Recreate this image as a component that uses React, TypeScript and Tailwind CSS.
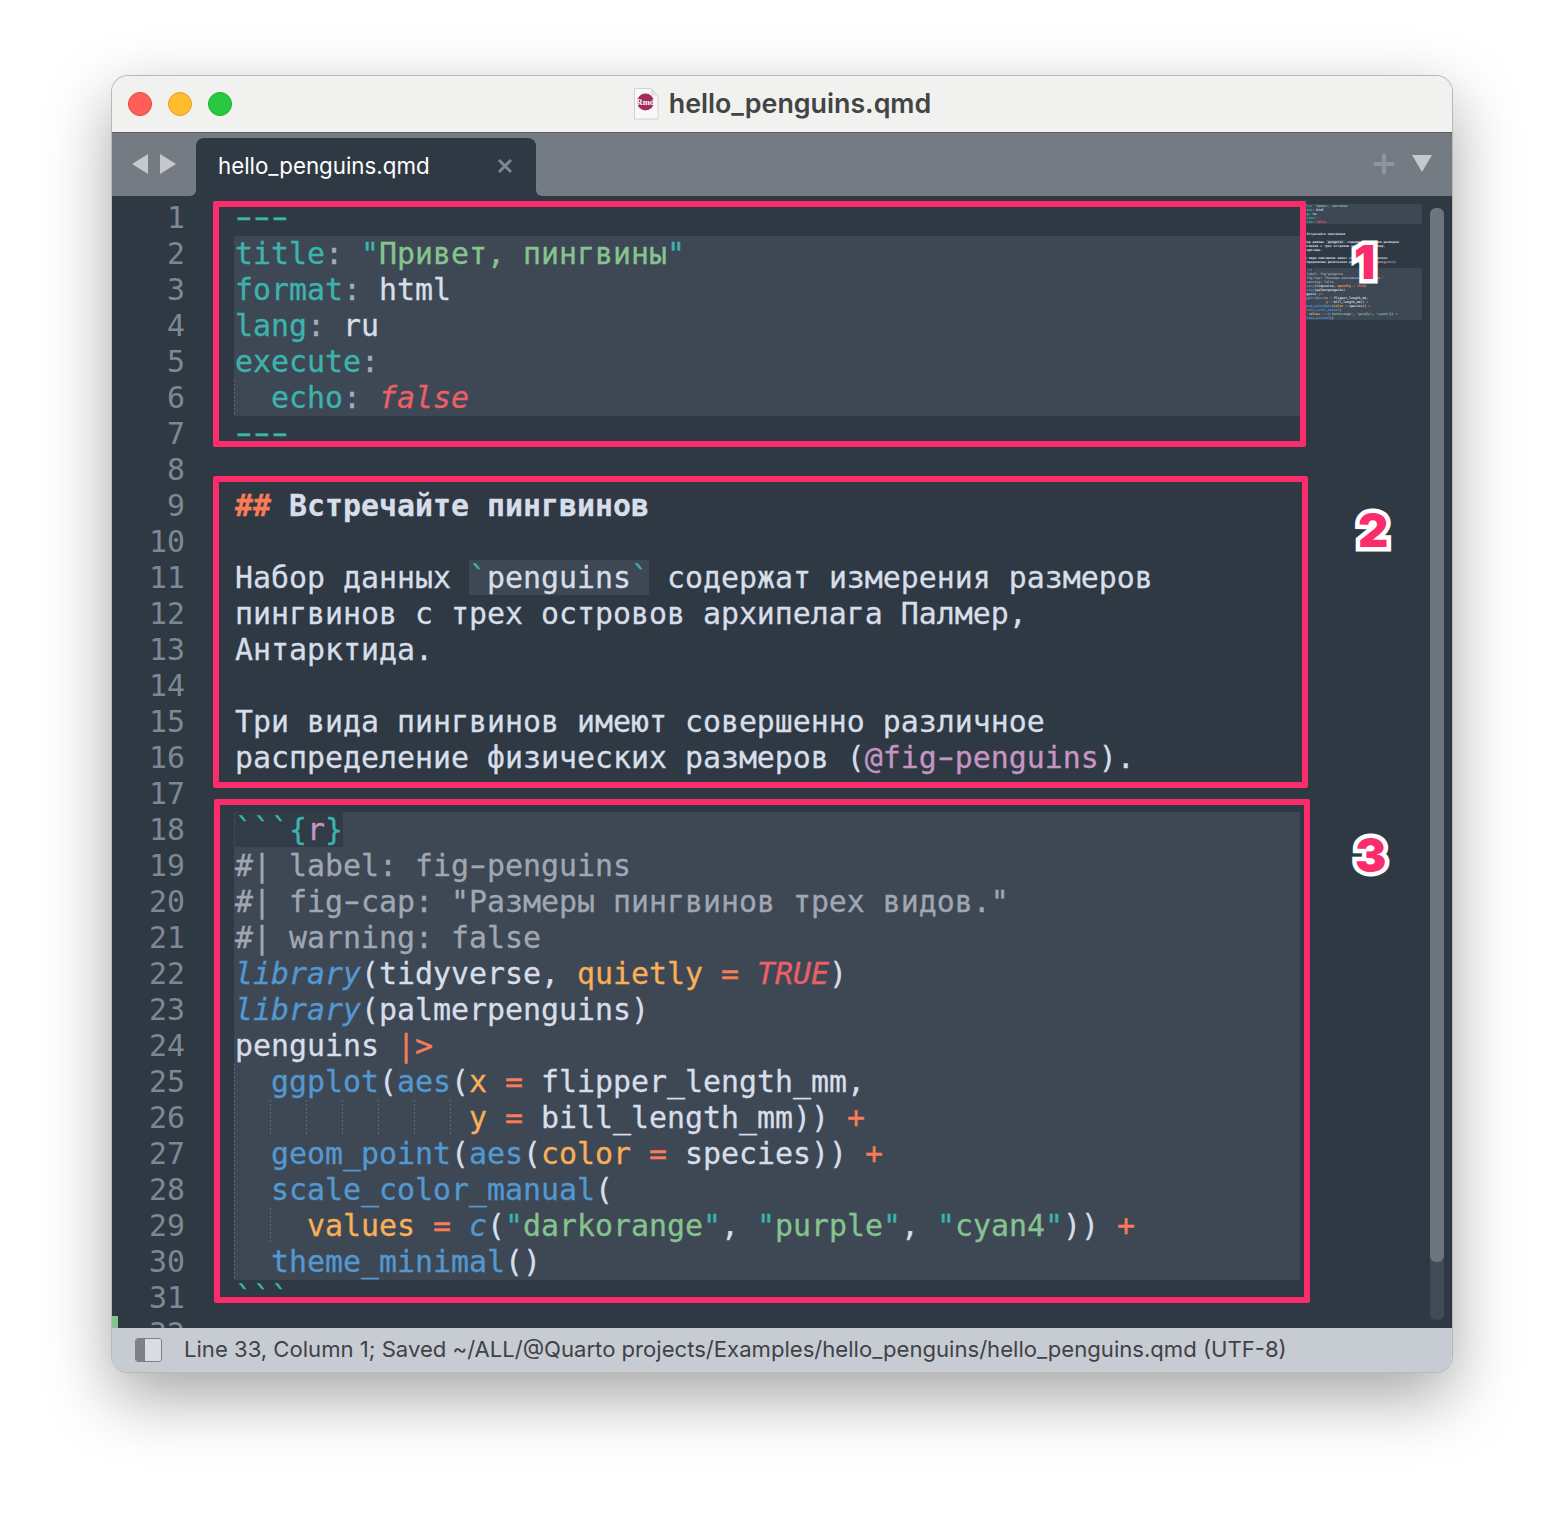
const COLORS = {
  w: "text-[#d8dee9]",
  t: "text-[#3db3ae]",
  g: "text-[#86c38f]",
  p: "text-[#a6acb9]",
  c: "text-[#a0a7b2]",
  o: "text-[#f9ae58]",
  r: "text-[#ec5f66] italic",
  x: "text-[#f97b58]",
  b: "text-[#5398d0]",
  i: "text-[#5398d0] italic",
  m: "text-[#c695c6]",
  h: "text-[#f97b58] font-bold",
  f: "text-[#d8dee9] font-bold",
  u: "text-[#3db3ae] bg-[#3e4855]",
  v: "text-[#d8dee9] bg-[#3e4855]",
  y: "text-[#3db3ae] bg-[#323c47]",
  z: "text-[#c695c6] bg-[#323c47]",
};

type Tok = [string, keyof typeof COLORS];
type Line = { toks: Tok[]; hl?: boolean; guides?: number[] };

const LINES: Line[] = [
  { toks: [["---", "t"]] },
  { hl: true, toks: [["title", "t"], [":", "p"], [" ", "w"], ['"', "t"], ["Привет, пингвины", "g"], ['"', "t"]] },
  { hl: true, toks: [["format", "t"], [":", "p"], [" html", "w"]] },
  { hl: true, toks: [["lang", "t"], [":", "p"], [" ru", "w"]] },
  { hl: true, toks: [["execute", "t"], [":", "p"]] },
  { hl: true, guides: [0], toks: [["  echo", "t"], [":", "p"], [" ", "w"], ["false", "r"]] },
  { toks: [["---", "t"]] },
  { toks: [] },
  { toks: [["##", "h"], [" Встречайте пингвинов", "f"]] },
  { toks: [] },
  { toks: [["Набор данных ", "w"], ["`", "u"], ["penguins", "v"], ["`", "u"], [" содержат измерения размеров", "w"]] },
  { toks: [["пингвинов с трех островов архипелага Палмер,", "w"]] },
  { toks: [["Антарктида.", "w"]] },
  { toks: [] },
  { toks: [["Три вида пингвинов имеют совершенно различное", "w"]] },
  { toks: [["распределение физических размеров (", "w"], ["@fig-penguins", "m"], [").", "w"]] },
  { toks: [] },
  { hl: true, toks: [["```{", "y"], ["r", "z"], ["}", "y"]] },
  { hl: true, toks: [["#| label: fig-penguins", "c"]] },
  { hl: true, toks: [['#| fig-cap: "Размеры пингвинов трех видов."', "c"]] },
  { hl: true, toks: [["#| warning: false", "c"]] },
  { hl: true, toks: [["library", "i"], ["(tidyverse, ", "w"], ["quietly", "o"], [" ", "w"], ["=", "x"], [" ", "w"], ["TRUE", "r"], [")", "w"]] },
  { hl: true, toks: [["library", "i"], ["(palmerpenguins)", "w"]] },
  { hl: true, toks: [["penguins ", "w"], ["|>", "x"]] },
  { hl: true, guides: [0], toks: [["  ", "w"], ["ggplot", "b"], ["(", "w"], ["aes", "b"], ["(", "w"], ["x", "o"], [" ", "w"], ["=", "x"], [" flipper_length_mm,", "w"]] },
  { hl: true, guides: [0, 2, 4, 6, 8, 10, 12], toks: [["             ", "w"], ["y", "o"], [" ", "w"], ["=", "x"], [" bill_length_mm)) ", "w"], ["+", "x"]] },
  { hl: true, guides: [0], toks: [["  ", "w"], ["geom_point", "b"], ["(", "w"], ["aes", "b"], ["(", "w"], ["color", "o"], [" ", "w"], ["=", "x"], [" species)) ", "w"], ["+", "x"]] },
  { hl: true, guides: [0], toks: [["  ", "w"], ["scale_color_manual", "b"], ["(", "w"]] },
  { hl: true, guides: [0, 2], toks: [["    ", "w"], ["values", "o"], [" ", "w"], ["=", "x"], [" ", "w"], ["c", "i"], ["(", "w"], ['"', "t"], ["darkorange", "g"], ['"', "t"], [", ", "w"], ['"', "t"], ["purple", "g"], ['"', "t"], [", ", "w"], ['"', "t"], ["cyan4", "g"], ['"', "t"], [")) ", "w"], ["+", "x"]] },
  { hl: true, guides: [0], toks: [["  ", "w"], ["theme_minimal", "b"], ["()", "w"]] },
  { toks: [["```", "t"]] },
  { toks: [] },
];

const MONO = "font-['DejaVu_Sans_Mono','Liberation_Mono',monospace]";
const UI = "font-['Inter','Liberation_Sans',sans-serif]";

// the reference font has long dashes that nearly touch
function Dashed({ text }: { text: string }) {
  return (
    <>
      {text.split(/(-)/).map((part, i) =>
        part === "-" ? (
          <span key={i} className="inline-block -translate-y-px scale-x-[1.6]">
            -
          </span>
        ) : (
          part
        ),
      )}
    </>
  );
}

function CodeLine({ line, guides }: { line: Line; guides: boolean }) {
  return (
    <div className={`h-full whitespace-pre pl-px ${line.hl ? "bg-[#3e4855]" : ""}`}>
      {guides &&
        line.guides?.map((g) => (
          <span
            key={g}
            className="absolute h-[36px] w-px bg-[repeating-linear-gradient(to_bottom,#5f6975_0_2px,transparent_2px_4px)]"
            style={{ left: g * 18 }}
          />
        ))}
      {line.toks.map(([text, kind], i) => (
        <span key={i} className={COLORS[kind]}>
          <Dashed text={text} />
        </span>
      ))}
    </div>
  );
}

function Callout({ n, className }: { n: string; className: string }) {
  return (
    <span
      className={`absolute font-['Inter',sans-serif] text-[47px] leading-none font-black text-[#fb2c6b] [-webkit-text-stroke:9px_white] [paint-order:stroke_fill] ${className}`}
    >
      {n}
    </span>
  );
}

function FileIcon() {
  return (
    <svg width="26" height="33" viewBox="0 0 26 33" className="mr-[10px]">
      <path d="M1.5 1.5H18L25 8.5V32H1.5Z" fill="#f8f8f8" stroke="#d2d2d2" />
      <path d="M18 1.5V8.5H25Z" fill="#dddddd" />
      <circle cx="12.5" cy="15" r="8.5" fill="#a22d5c" />
      <text
        x="12.5"
        y="18"
        textAnchor="middle"
        fontSize="8.5"
        fontWeight="700"
        fontFamily="Liberation Serif, serif"
        fill="#ffffff"
      >
        Rmd
      </text>
    </svg>
  );
}

export default function App() {
  return (
    <div className="h-[1520px] bg-white pt-[76px] pl-[112px]">
      <div className="relative flex h-[1296px] w-[1340px] flex-col overflow-hidden rounded-[16px] shadow-[0_0_0_1px_#b9b9b9,0_24px_66px_rgba(0,0,0,0.36)]">
        {/* Title bar */}
        <div className="relative flex h-[57px] shrink-0 items-center justify-center border-b border-[#5c6066] bg-[#f1f1ef] pb-[2px]">
          <div className="absolute top-[16px] left-[16px] flex gap-[16px]">
            <span className="h-[24px] w-[24px] rounded-full border border-[#e0443e] bg-[#ff5f57]" />
            <span className="h-[24px] w-[24px] rounded-full border border-[#dea123] bg-[#febc2e]" />
            <span className="h-[24px] w-[24px] rounded-full border border-[#1aab29] bg-[#28c840]" />
          </div>
          <FileIcon />
          <span className={`${UI} text-[26.8px] font-semibold text-[#444444]`}>hello_penguins.qmd</span>
        </div>

        {/* Tab bar */}
        <div className="flex h-[63px] shrink-0 bg-[#2f3943]">
          <div className="flex w-[84px] items-center gap-[12px] rounded-br-[6px] bg-[#747b83] pb-[2px] pl-[20px]">
            <svg width="16" height="20" viewBox="0 0 16 20">
              <path d="M16 0V20L0 10Z" fill="#c6c8cb" />
            </svg>
            <svg width="16" height="20" viewBox="0 0 16 20">
              <path d="M0 0V20L16 10Z" fill="#c6c8cb" />
            </svg>
          </div>
          <div className="flex w-[340px] flex-col bg-[#747b83] pt-[5px]">
            <div className={`flex flex-1 items-center justify-between rounded-t-[8px] bg-[#2f3943] pr-[23px] pl-[22px] pb-[2px] ${UI} text-[22.3px] text-white`}>
              <span>hello_penguins.qmd</span>
              <svg width="16" height="16" viewBox="0 0 16 16">
                <path d="M2 2L14 14M14 2L2 14" stroke="#7e8691" strokeWidth="3" />
              </svg>
            </div>
          </div>
          <div className="flex flex-1 items-center justify-end gap-[18px] rounded-bl-[6px] bg-[#747b83] pr-[20px] pb-[2px]">
            <svg width="20" height="20" viewBox="0 0 20 20">
              <path d="M10 0V20M0 10H20" stroke="#8f959c" strokeWidth="4" />
            </svg>
            <svg width="20" height="17" viewBox="0 0 20 17">
              <path d="M0 0H20L10 17Z" fill="#c6c8cb" />
            </svg>
          </div>
        </div>

        {/* Editor */}
        <div className={`relative flex min-h-0 flex-1 overflow-hidden bg-[#2f3943] pt-[4px] ${MONO}`}>
          <div className="w-[122px] shrink-0 pr-[49px] text-right text-[29.9px] leading-[36px] text-[#7e8894]">
            {LINES.map((_, i) => (
              <div key={i} className="h-[36px]">
                {i + 1}
              </div>
            ))}
          </div>
          <div className="relative w-[1066px] shrink-0 text-[29.9px] leading-[36px] [-webkit-text-stroke:0.3px]">
            {LINES.map((line, i) => (
              <div key={i} className="h-[36px]">
                <CodeLine line={line} guides />
              </div>
            ))}
          </div>
          <div className="w-[122px] shrink-0 overflow-hidden text-[3.2px] leading-[4px] font-bold">
            {LINES.map((line, i) => (
              <div key={i} className="h-[4px]">
                <CodeLine line={line} guides={false} />
              </div>
            ))}
          </div>
          <div className="mt-[8px] ml-[8px] h-[1112px] w-[14px] rounded-[6px] bg-[#414b56]">
            <div className="h-[1054px] rounded-[6px] bg-[#6c757d]" />
          </div>
          <span className="absolute bottom-0 left-0 h-[12px] w-[6px] bg-[#86c38f]" />
        </div>

        {/* Status bar */}
        <div className={`flex h-[44px] shrink-0 items-center bg-[#c7cbd2] pl-[23px] ${UI} text-[22.1px] text-[#3f4247]`}>
          <span className="mr-[22px] flex h-[24px] w-[27px] overflow-hidden rounded-[3px] border border-[#7d8186]">
            <span className="w-[9px] bg-[#7d8186]" />
            <span className="flex-1 bg-[#d9dce0]" />
          </span>
          Line 33, Column 1; Saved ~/ALL/@Quarto projects/Examples/hello_penguins/hello_penguins.qmd (UTF-8)
        </div>

        {/* Annotations */}
        <div className="absolute top-[125px] left-[101px] h-[246px] w-[1093px] rounded-[2px] border-[6px] border-[#fb2c6b]" />
        <div className="absolute top-[400px] left-[101px] h-[312px] w-[1095px] rounded-[2px] border-[6px] border-[#fb2c6b]" />
        <div className="absolute top-[723px] left-[102px] h-[504px] w-[1096px] rounded-[2px] border-[6px] border-[#fb2c6b]" />
        <Callout n="1" className="top-[162px] left-[1242px]" />
        <Callout n="2" className="top-[430px] left-[1246px]" />
        <Callout n="3" className="top-[755px] left-[1243px]" />
      </div>
    </div>
  );
}
